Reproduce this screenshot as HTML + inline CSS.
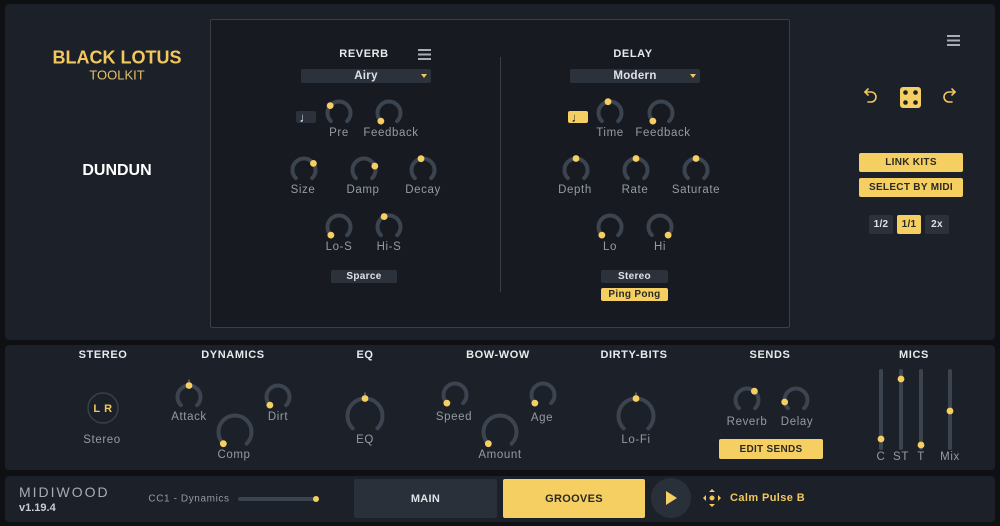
<!DOCTYPE html>
<html><head><meta charset="utf-8">
<style>
*{margin:0;padding:0;box-sizing:border-box}
body{width:1000px;height:526px;background:#0e1013;position:relative;overflow:hidden;font-family:"Liberation Sans",sans-serif;color:#9aa0a8}
.a{position:absolute}
.p{position:absolute;background:#1c2028;border-radius:4px}
.t{position:absolute;transform:translate(-50%,-50%);white-space:nowrap;font-size:11.5px;letter-spacing:.6px;color:#959ba3}
.h{position:absolute;transform:translate(-50%,-50%);white-space:nowrap;font-size:11px;font-weight:bold;letter-spacing:.6px;color:#e8eaed}
.b{position:absolute;display:flex;align-items:center;justify-content:center;font-size:10px;font-weight:bold;border-radius:2px;letter-spacing:.3px}
.y{background:#f6cf62;color:#2a2a22}
.g{background:#2c323c;color:#dfe2e6}
svg{position:absolute;left:0;top:0}
</style></head><body>
<div class="p" style="left:5px;top:4px;width:990px;height:336px"></div>
<div class="a" style="left:210px;top:19px;width:580px;height:309px;background:#171b21;border:1px solid #3a3f47;border-radius:2px"></div>
<div class="p" style="left:5px;top:345px;width:990px;height:125px"></div>
<div class="p" style="left:5px;top:476px;width:990px;height:46px"></div>

<div class="h" style="left:117px;top:58px;font-size:18px;color:#f2c85e;letter-spacing:0">BLACK LOTUS</div>
<div class="t" style="left:117px;top:75px;font-size:13px;color:#e6c06a;letter-spacing:0">TOOLKIT</div>
<div class="h" style="left:117px;top:171px;font-size:16px;color:#fff;letter-spacing:0">DUNDUN</div>

<div class="h" style="left:364px;top:54px">REVERB</div>
<div class="h" style="left:633px;top:54px">DELAY</div>
<div class="b g" style="left:301px;top:69px;width:130px;height:14px;font-size:11.5px">Airy</div>
<div class="b g" style="left:570px;top:69px;width:130px;height:14px;font-size:11.5px">Modern</div>
<div class="b g" style="left:296px;top:111px;width:20px;height:12px;font-size:13px">♩</div>
<div class="b y" style="left:568px;top:111px;width:20px;height:12px;font-size:13px">♩</div>
<div class="b g" style="left:331px;top:270px;width:66px;height:13px">Sparce</div>
<div class="b g" style="left:601px;top:270px;width:67px;height:13px">Stereo</div>
<div class="b y" style="left:601px;top:288px;width:67px;height:13px">Ping Pong</div>
<div class="a" style="left:500px;top:57px;width:1px;height:235px;background:#3a3f47"></div>

<div class="t" style="left:339px;top:133px">Pre</div>
<div class="t" style="left:391px;top:133px">Feedback</div>
<div class="t" style="left:303px;top:190px">Size</div>
<div class="t" style="left:363px;top:190px">Damp</div>
<div class="t" style="left:423px;top:190px">Decay</div>
<div class="t" style="left:339px;top:247px">Lo-S</div>
<div class="t" style="left:389px;top:247px">Hi-S</div>
<div class="t" style="left:610px;top:133px">Time</div>
<div class="t" style="left:663px;top:133px">Feedback</div>
<div class="t" style="left:575px;top:190px">Depth</div>
<div class="t" style="left:635px;top:190px">Rate</div>
<div class="t" style="left:696px;top:190px">Saturate</div>
<div class="t" style="left:610px;top:247px">Lo</div>
<div class="t" style="left:660px;top:247px">Hi</div>

<div class="b y" style="left:859px;top:153px;width:104px;height:19px;font-size:10px">LINK KITS</div>
<div class="b y" style="left:859px;top:178px;width:104px;height:19px;font-size:10px">SELECT BY MIDI</div>
<div class="b g" style="left:869px;top:215px;width:24px;height:19px">1/2</div>
<div class="b y" style="left:897px;top:215px;width:24px;height:19px">1/1</div>
<div class="b g" style="left:925px;top:215px;width:24px;height:19px">2x</div>

<div class="h" style="left:103px;top:355px">STEREO</div>
<div class="h" style="left:233px;top:355px">DYNAMICS</div>
<div class="h" style="left:365px;top:355px">EQ</div>
<div class="h" style="left:498px;top:355px">BOW-WOW</div>
<div class="h" style="left:634px;top:355px">DIRTY-BITS</div>
<div class="h" style="left:770px;top:355px">SENDS</div>
<div class="h" style="left:914px;top:355px">MICS</div>
<div class="h" style="left:103px;top:409px;color:#f2c85e;font-size:11px">L R</div>
<div class="t" style="left:102px;top:440px">Stereo</div>
<div class="t" style="left:189px;top:417px">Attack</div>
<div class="t" style="left:278px;top:417px">Dirt</div>
<div class="t" style="left:234px;top:455px">Comp</div>
<div class="t" style="left:365px;top:440px">EQ</div>
<div class="t" style="left:454px;top:417px">Speed</div>
<div class="t" style="left:542px;top:418px">Age</div>
<div class="t" style="left:500px;top:455px">Amount</div>
<div class="t" style="left:636px;top:440px">Lo-Fi</div>
<div class="t" style="left:747px;top:422px">Reverb</div>
<div class="t" style="left:797px;top:422px">Delay</div>
<div class="b y" style="left:719px;top:439px;width:104px;height:20px">EDIT SENDS</div>
<div class="t" style="left:881px;top:457px">C</div>
<div class="t" style="left:901px;top:457px">ST</div>
<div class="t" style="left:921px;top:457px">T</div>
<div class="t" style="left:950px;top:457px">Mix</div>

<div class="a" style="left:19px;top:484px;font-size:14px;letter-spacing:2px;color:#a8acb2">MIDIWOOD</div>
<div class="a" style="left:19px;top:502px;font-size:11px;font-weight:bold;color:#c8ccd0">v1.19.4</div>
<div class="t" style="left:189px;top:499px;font-size:10px">CC1 - Dynamics</div>
<div class="b g" style="left:354px;top:479px;width:143px;height:39px;font-size:11px;background:#2a303a">MAIN</div>
<div class="b y" style="left:503px;top:479px;width:142px;height:39px;font-size:11px">GROOVES</div>
<div class="a" style="left:730px;top:492px;font-size:11px;font-weight:bold;color:#f2c85e;letter-spacing:.4px">Calm Pulse B</div>

<svg width="1000" height="526" id="s">
<g stroke="#a9aeb5" stroke-width="2"><line x1="418" y1="50" x2="431" y2="50"/><line x1="418" y1="54.5" x2="431" y2="54.5"/><line x1="418" y1="59" x2="431" y2="59"/>
<line x1="947" y1="36" x2="960" y2="36"/><line x1="947" y1="40.5" x2="960" y2="40.5"/><line x1="947" y1="45" x2="960" y2="45"/></g>
<path d="M421 74h6l-3 4z" fill="#f2c85e"/><path d="M690 74h6l-3 4z" fill="#f2c85e"/>
<g fill="none" stroke="#f2c85e" stroke-width="1.6" stroke-linecap="round">
<path d="M865 92h6a5 5 0 0 1 0 10h-3"/><path d="M868 89l-3 3 3 3"/>
<path d="M955 92h-6a5 5 0 0 0 0 10h3"/><path d="M952 89l3 3-3 3"/></g>
<rect x="900" y="87" width="21" height="21" rx="3" fill="#f6cf62"/>
<g fill="#1c2028"><circle cx="905.5" cy="92.5" r="2.3"/><circle cx="915.5" cy="92.5" r="2.3"/><circle cx="905.5" cy="102.5" r="2.3"/><circle cx="915.5" cy="102.5" r="2.3"/></g>
<circle cx="103" cy="408" r="15" fill="none" stroke="#3a404a" stroke-width="1.5"/>
<line x1="240" y1="499" x2="316" y2="499" stroke="#3c4450" stroke-width="4" stroke-linecap="round"/>
<circle cx="316" cy="499" r="3" fill="#f6cf62"/>
<circle cx="671" cy="498" r="20" fill="#2a303a"/>
<path d="M666 491v14l11-7z" fill="#f6cf62"/>
<g fill="#f2c85e"><circle cx="712" cy="498" r="2.5"/><path d="M712 489l-3 3h6zM712 507l-3-3h6zM703 498l3-3v6zM721 498l-3-3v6z"/></g>
<g id="k"></g>
</svg>
<script>
var k=document.getElementById('k'),h='';
function kn(x,y,r,a,tick){var s=-135*Math.PI/180,e=135*Math.PI/180;
var x1=x+r*Math.sin(s),y1=y-r*Math.cos(s),x2=x+r*Math.sin(e),y2=y-r*Math.cos(e);
h+='<path d="M'+x1+' '+y1+'A'+r+' '+r+' 0 1 1 '+x2+' '+y2+'" fill="none" stroke="#3c4450" stroke-width="4" stroke-linecap="round"/>';
var t=a*Math.PI/180;h+='<circle cx="'+(x+r*Math.sin(t))+'" cy="'+(y-r*Math.cos(t))+'" r="3.4" fill="#f6cf62"/>';
if(tick)h+='<line x1="'+x+'" y1="'+(y-r-6)+'" x2="'+x+'" y2="'+(y-r-3)+'" stroke="#8e949c" stroke-width="1"/>';}
kn(339,113,11.5,-50);kn(389,113,11.5,-135);kn(304,170,11.5,55);kn(364,170,11.5,70);kn(423,170,11.5,-10);
kn(339,227,11.5,-135);kn(389,227,11.5,-25);
kn(610,113,11.5,-10);kn(661,113,11.5,-135);kn(576,170,11.5,0);kn(636,170,11.5,0);kn(696,170,11.5,0);
kn(610,227,11.5,-135);kn(660,227,11.5,135);
kn(189,397,11.5,0,1);kn(278,397,11.5,-135);kn(235,432,16.5,-135);kn(365,416,17.5,0,1);
kn(455,395,11.5,-135);kn(543,395,11.5,-135);kn(500,432,16.5,-135);kn(636,416,17.5,0,1);
kn(747,400,11.5,40);kn(796,400,11.5,-100);
[[881,439],[901,379],[921,445],[950,411]].forEach(function(p){h+='<line x1="'+p[0]+'" y1="371" x2="'+p[0]+'" y2="448" stroke="#3c4450" stroke-width="4" stroke-linecap="round"/><circle cx="'+p[0]+'" cy="'+p[1]+'" r="3.4" fill="#f6cf62"/>';});
k.innerHTML=h;
</script>
</body></html>
